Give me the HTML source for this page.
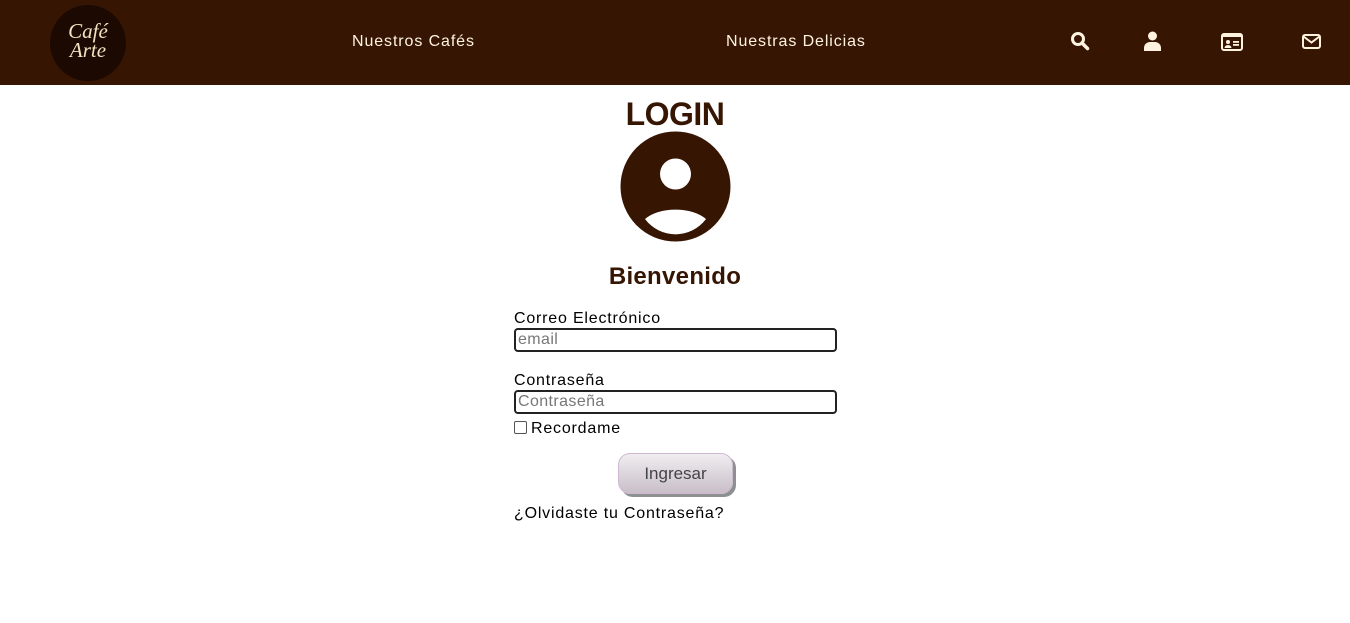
<!DOCTYPE html>
<html><head><meta charset="utf-8"><style>
body{margin:0;background:#fff;font-family:"Liberation Sans",sans-serif;width:1350px;height:623px;overflow:hidden;position:relative}
.hdr{position:absolute;left:0;top:0;width:1350px;height:85px;background:#361503}
.logo{position:absolute;left:50px;top:5px;width:76px;height:76px;border-radius:50%;background:#1c0a02;color:#f0e2c0;font-family:"Liberation Serif",serif;font-style:italic;text-align:center;font-size:21px;line-height:19px;box-sizing:border-box;padding-top:17px}
.nav{position:absolute;top:33px;color:#fff3e0;font-size:16px;letter-spacing:0.9px}
.ic{position:absolute;top:31px}
h1{position:absolute;top:96px;left:0;width:1350px;text-align:center;margin:0;font-size:32px;color:#361503;font-weight:bold;line-height:36px;letter-spacing:-0.5px}
.av{position:absolute;left:620px;top:131px}
h2{position:absolute;top:263px;left:0;width:1350px;text-align:center;margin:0;font-size:24px;color:#361503;font-weight:bold;letter-spacing:0.3px}
.lbl{position:absolute;left:514px;font-size:16px;color:#000;letter-spacing:0.8px}
.inp{position:absolute;left:514px;width:323px;height:24px;border:2px solid #222;border-radius:4px;box-sizing:border-box;color:#777;font-size:16px;padding-left:2px;line-height:20px;letter-spacing:0.4px}
.cb{position:absolute;left:514px;top:421px;width:11px;height:11px;border:1px solid #555;border-radius:2px}
.btn{position:absolute;left:618px;top:453px;width:115px;height:41px;border-radius:12px;background:linear-gradient(#f0eef0,#c9bec9);border:1px solid #d0b8d0;box-shadow:3px 3px 0 #8c9090;box-sizing:border-box;text-align:center;line-height:39px;color:#444;font-size:17px}
</style></head><body>
<div class="hdr">
<div class="logo">Café<br>Arte</div>
<div class="nav" style="left:352px">Nuestros Cafés</div>
<div class="nav" style="left:726px">Nuestras Delicias</div>
<svg class="ic" style="left:1070px" width="20" height="20" viewBox="0 0 20 20"><circle cx="8" cy="8" r="5.5" fill="none" stroke="#fff3e0" stroke-width="3"/><path d="M12 12l5.5 5.5" stroke="#fff3e0" stroke-width="3.5" stroke-linecap="round"/></svg>
<svg class="ic" style="left:1144px" width="17" height="20" viewBox="0 0 17 20"><circle cx="8.5" cy="5" r="4.5" fill="#fff3e0"/><path d="M0 20v-3a6 6 0 0 1 6-6h5a6 6 0 0 1 6 6v3z" fill="#fff3e0"/></svg>
<svg class="ic" style="left:1221px;top:33px" width="22" height="18" viewBox="0 0 22 18"><rect x="1" y="1" width="20" height="16" rx="2" fill="none" stroke="#fff3e0" stroke-width="2"/><rect x="1" y="1" width="20" height="3" fill="#fff3e0"/><circle cx="7" cy="9" r="2" fill="#fff3e0"/><path d="M3.5 15a3.5 3 0 0 1 7 0z" fill="#fff3e0"/><rect x="12" y="8" width="6" height="1.8" fill="#fff3e0"/><rect x="12" y="11" width="6" height="1.8" fill="#fff3e0"/></svg>
<svg class="ic" style="left:1302px;top:34px" width="19" height="15" viewBox="0 0 19 15"><rect x="1" y="1" width="17" height="13" rx="2" fill="none" stroke="#fff3e0" stroke-width="2"/><path d="M1.5 2.5l8 6 8-6" fill="none" stroke="#fff3e0" stroke-width="2"/></svg>
</div>
<h1>LOGIN</h1>
<svg class="av" width="111" height="111" viewBox="0 0 111 111"><circle cx="55.5" cy="55.5" r="55" fill="#361503"/><circle cx="55.5" cy="43" r="15.5" fill="#fff"/><path d="M25 88a36 20 0 0 1 61 0a38 38 0 0 1-61 0z" fill="#fff"/></svg>
<h2>Bienvenido</h2>
<div class="lbl" style="top:310px">Correo Electrónico</div>
<div class="inp" style="top:328px">email</div>
<div class="lbl" style="top:372px">Contraseña</div>
<div class="inp" style="top:390px">Contraseña</div>
<div class="cb"></div>
<div class="lbl" style="top:420px;left:531px">Recordame</div>
<div class="btn">Ingresar</div>
<div class="lbl" style="top:505px">¿Olvidaste tu Contraseña?</div>
</body></html>
